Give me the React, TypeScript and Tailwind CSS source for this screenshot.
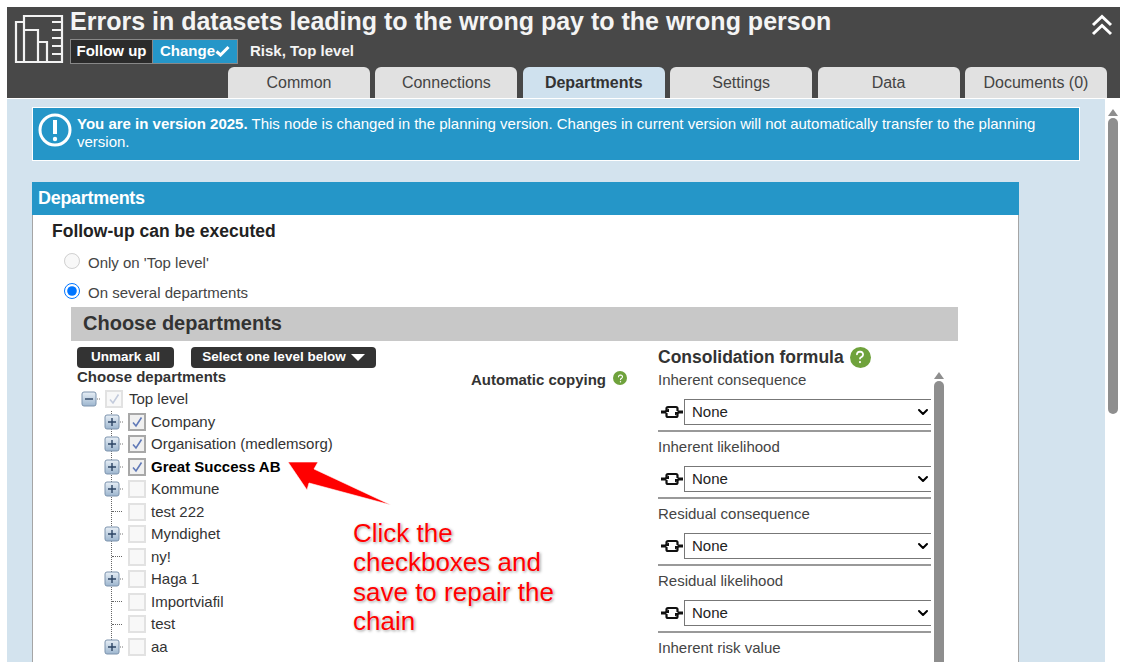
import { FaQuestion } from "react-icons/fa6";
import { ChevronDown } from "lucide-react";

const tabs = ["Common", "Connections", "Departments", "Settings", "Data", "Documents (0)"];

const treeRows = [
  { label: "Company", checked: true, plus: true },
  { label: "Organisation (medlemsorg)", checked: true, plus: true },
  { label: "Great Success AB", checked: true, plus: true, bold: true },
  { label: "Kommune", plus: true },
  { label: "test 222" },
  { label: "Myndighet", plus: true },
  { label: "ny!" },
  { label: "Haga 1", plus: true },
  { label: "Importviafil" },
  { label: "test" },
  { label: "aa", plus: true },
];

const formulas = [
  "Inherent consequence",
  "Inherent likelihood",
  "Residual consequence",
  "Residual likelihood",
  "Inherent risk value",
];

const Logo = () => (
  <svg width="50" height="50" viewBox="0 0 50 50" fill="none" stroke="#f2f2f2" strokeWidth="2.2" className="shrink-0">
    <path d="M10 2h38v46H10z" />
    <path d="M10 8H2v40h30" />
    <path d="M10 16h14v32M24 28h9v20M38 8h10M38 16h10M38 24h10M38 32h10M38 40h10" />
  </svg>
);

const TreeToggle = ({ minus }: { minus?: boolean }) => (
  <svg width="22" height="16" viewBox="0 0 22 16" className="shrink-0">
    <defs>
      <linearGradient id="toggle" x1="0" y1="0" x2="0" y2="1">
        <stop offset="0" stopColor="#e8eff6" />
        <stop offset="1" stopColor="#9db6cf" />
      </linearGradient>
    </defs>
    <rect x="1" y="1" width="14" height="14" rx="2" fill="url(#toggle)" stroke="#7c93ad" />
    <path d={minus ? "M4 8h8" : "M4 8h8M8 4v8"} stroke="#2c4464" strokeWidth="1.4" />
    <path d="M16 8h4" stroke="#777" strokeDasharray="1 1" />
  </svg>
);

const TreeCheck = ({ checked, faded }: { checked?: boolean; faded?: boolean }) => (
  <div
    className={`w-[18px] h-[18px] shrink-0 border-2 flex items-center justify-center ${
      checked && !faded ? "border-[#a8a8a8] bg-[#f0f0f0]" : "border-[#e2e2e2] bg-[#f8f8f8]"
    }`}
  >
    {checked && (
      <svg width="12" height="12" viewBox="0 0 12 12" fill="none">
        <path d="M2 6.5 5 10 10.5 1.5" stroke={faded ? "#c3cbdc" : "#6079b8"} strokeWidth="1.6" />
      </svg>
    )}
  </div>
);

const LinkIcon = () => (
  <svg width="22" height="14" viewBox="0 0 22 14" className="shrink-0">
    <path d="M5.5 6V3.5a1.5 1.5 0 0 1 1.5-1.5h8a1.5 1.5 0 0 1 1.5 1.5V6M16.5 8v2.5a1.5 1.5 0 0 1-1.5 1.5H7a1.5 1.5 0 0 1-1.5-1.5V8" fill="none" stroke="#111" strokeWidth="2.2" />
    <path d="M0 7h5.5M16.5 7H22" stroke="#111" strokeWidth="2.8" />
    <path d="M2 7l6-3.5V7zM20 7l-6 3.5V7z" fill="#111" />
  </svg>
);

const App = () => {
  return (
    <div className="relative w-[1128px] h-[662px] overflow-hidden bg-white pt-[7px] pl-[7px] pr-[8px] font-['Liberation_Sans',Arial,sans-serif] text-[#222]">
      <header className="h-[91px] bg-[#484848] flex flex-col">
        <div className="flex flex-1 pl-[7px] pt-[2px] pr-[6px]">
          <div className="pt-[5px]">
            <Logo />
          </div>
          <div className="ml-[6px] flex-1">
            <h1 className="text-[25px] leading-[25px] font-bold text-[#f4f4f4]">
              Errors in datasets leading to the wrong pay to the wrong person
            </h1>
            <div className="flex items-center mt-[5px]">
              <span className="h-[25px] w-[83px] border border-[#888] bg-[#2b2b2b] text-white text-[15px] font-bold flex items-center justify-center">
                Follow up
              </span>
              <span className="h-[25px] w-[85px] border border-[#888] border-l-0 bg-[#2596c8] text-white text-[15px] font-bold flex items-center justify-center">
                Change
                <svg width="15" height="12" viewBox="0 0 15 12" fill="none" className="-mt-[2px]">
                  <path d="M1.5 6.5 5.5 10 13.5 2" stroke="white" strokeWidth="3" />
                </svg>
              </span>
              <span className="ml-[12px] text-[15px] font-bold text-[#f4f4f4]">Risk, Top level</span>
            </div>
          </div>
          <svg width="22" height="22" viewBox="0 0 22 22" fill="none" stroke="white" strokeWidth="3" className="mt-[5px] mr-[1px]">
            <path d="M2 11 11 2.5 20 11M2 20l9-8.5L20 20" />
          </svg>
        </div>
        <nav className="flex gap-[5.4px] pl-[221px] h-[31px]">
          {tabs.map((tab) => (
            <div
              key={tab}
              className={`w-[142px] rounded-t-[6px] flex items-center justify-center text-[16px] ${
                tab === "Departments" ? "bg-[#cfe1ee] font-bold text-[#333]" : "bg-[#e1e1e1] text-[#444]"
              }`}
            >
              {tab}
            </div>
          ))}
        </nav>
      </header>

      <div className="flex h-[564px] mt-[1px]">
        <main className="w-[1098px] shrink-0 bg-[#d3e3ee] pt-[8px] pl-[25px] overflow-hidden">
          <div className="w-[1048px] h-[54px] bg-[#2596c8] border border-white flex items-start text-white text-[15px] leading-[17.5px]">
            <svg width="34" height="34" viewBox="0 0 34 34" className="shrink-0 ml-[5px] mt-[5px]" fill="none">
              <circle cx="17" cy="17" r="15" stroke="white" strokeWidth="3" />
              <path d="M17 7v14" stroke="white" strokeWidth="4" />
              <circle cx="17" cy="26" r="2.2" fill="white" />
            </svg>
            <p className="ml-[5px] mt-[7px] w-[970px]">
              <b>You are in version 2025.</b> This node is changed in the planning version. Changes in current version
              will not automatically transfer to the planning version.
            </p>
          </div>

          <section className="w-[987px] mt-[21px] bg-white border-x border-[#a5a5a5] h-[600px]">
            <h2 className="h-[33px] -mx-px bg-[#2596c8] text-white text-[18px] font-bold leading-[33px] pl-[6px] tracking-[-0.3px]">
              Departments
            </h2>
            <div className="pl-[19px] pt-[6px]">
              <h3 className="text-[17.5px] leading-[20px] font-bold">Follow-up can be executed</h3>
              <label className="flex items-center h-[30px] mt-[7px] pl-[12px] text-[15px] text-[#444]">
                <input type="radio" disabled className="w-[16px] h-[16px] m-0 mb-[4px] mr-[8px]" />
                Only on 'Top level'
              </label>
              <label className="flex items-center h-[30px] pl-[12px] text-[15px] text-[#444]">
                <input type="radio" defaultChecked className="w-[16px] h-[16px] m-0 mb-[4px] mr-[8px]" />
                On several departments
              </label>

              <div className="ml-[19px] w-[887px] mt-[-1px]">
                <div className="h-[34px] bg-[#c8c8c8] text-[20px] font-bold text-[#333] leading-[32px] pl-[12px]">
                  Choose departments
                </div>
                <div className="flex">
                  <div className="w-[400px] pl-[6px] pt-[6px] shrink-0">
                    <div className="flex gap-[17px]">
                      <button className="h-[21px] w-[97px] rounded-[4px] bg-[#333] text-white text-[13.5px] font-bold">
                        Unmark all
                      </button>
                      <button className="h-[21px] w-[185px] rounded-[4px] bg-[#333] text-white text-[13.5px] font-bold flex items-center justify-center gap-[5px]">
                        Select one level below
                        <span className="w-0 h-0 border-x-[7px] border-x-transparent border-t-[7px] border-t-white" />
                      </button>
                    </div>
                    <div className="text-[15px] leading-[16px] font-bold text-[#333] mt-[1px]">Choose departments</div>
                    <div className="flex items-center h-[22.5px] pl-[4px] gap-[2px] mt-[3px] text-[15px] text-[#333]">
                      <TreeToggle minus />
                      <TreeCheck checked faded />
                      <span className="ml-[4px]">Top level</span>
                    </div>
                    <div className="relative pl-[27px]">
                      <div className="absolute left-[34px] top-0 bottom-[10px] border-l border-dotted border-[#666]" />
                      {treeRows.map((row) => (
                        <div key={row.label} className="relative flex items-center h-[22.5px] gap-[2px] text-[15px] text-[#333]">
                          {row.plus ? (
                            <TreeToggle />
                          ) : (
                            <div className="w-[22px] shrink-0 pl-[8px]">
                              <div className="w-[10px] border-t border-dotted border-[#666]" />
                            </div>
                          )}
                          <TreeCheck checked={row.checked} />
                          <span className={`ml-[3px] ${row.bold ? "font-bold text-black" : ""}`}>{row.label}</span>
                        </div>
                      ))}
                    </div>
                  </div>

                  <div className="w-[187px] shrink-0 pt-[30px] text-[15px] leading-[18px] font-bold text-[#333]">
                    <span className="inline-flex items-start gap-[7px]">
                      Automatic copying
                      <span className="w-[14px] h-[14px] rounded-full bg-[#6fa23c] flex items-center justify-center">
                        <FaQuestion className="w-[9px] h-[9px] text-white" />
                      </span>
                    </span>
                  </div>

                  <div className="relative w-[286px] pt-[5px]">
                    <div className="flex items-center gap-[6px] text-[17.5px] leading-[22px] font-bold text-[#333]">
                      Consolidation formula
                      <span className="w-[21px] h-[21px] rounded-full bg-[#6fa23c] flex items-center justify-center">
                        <FaQuestion className="w-[14px] h-[14px] text-white" />
                      </span>
                    </div>
                    {formulas.map((name) => (
                      <div key={name} className="w-[273px] h-[67px]">
                        <div className="text-[15px] leading-[17px] pt-[3px] h-[31px] text-[#444] box-border">{name}</div>
                        <div className="flex items-center gap-[1px] pl-[3px] pb-[5px] border-b-2 border-[#999]">
                          <LinkIcon />
                          <div className="relative w-[247px] overflow-hidden">
                            <select className="block appearance-none w-[249px] h-[26px] border border-[#777] bg-white text-[15px] text-[#222] pl-[7px]">
                              <option>None</option>
                            </select>
                            <ChevronDown className="absolute right-0 top-[5px] w-[16px] h-[16px] text-black pointer-events-none" strokeWidth={3} />
                          </div>
                        </div>
                      </div>
                    ))}
                    {/* inner scroll bar */}
                    <div className="absolute left-[274px] top-[28px] bottom-0 w-[13px] flex flex-col items-center pt-[3px]">
                      <span className="w-0 h-0 border-x-[5px] border-x-transparent border-b-[7px] border-b-[#8e8e8e]" />
                      <span className="w-[10px] flex-1 mt-[2px] rounded-t-full bg-[#8e8e8e]" />
                    </div>
                  </div>
                </div>
              </div>
            </div>
          </section>
        </main>
        <aside className="w-[15px] flex flex-col items-center pt-[10px]">
          <span className="w-0 h-0 border-x-[5px] border-x-transparent border-b-[7px] border-b-[#8e8e8e]" />
          <span className="w-[10px] h-[296px] mt-[2px] rounded-full bg-[#8e8e8e]" />
        </aside>
      </div>

      {/* screenshot annotation */}
      <svg className="absolute left-[280px] top-[450px]" width="120" height="65" viewBox="0 0 120 65">
        <path d="M8 12 38 12 34 19 111 55 29 33 27 40Z" fill="#f00" stroke="#fff" strokeOpacity="0.6" />
      </svg>
      <p className="absolute left-[353px] top-[519px] w-[230px] text-[26px] leading-[29.3px] text-[#f00] [text-shadow:0_0_2px_#fff,1px_1px_3px_#888]">
        Click the
        <br />
        checkboxes and
        <br />
        save to repair the
        <br />
        chain
      </p>
    </div>
  );
};

export default App;
